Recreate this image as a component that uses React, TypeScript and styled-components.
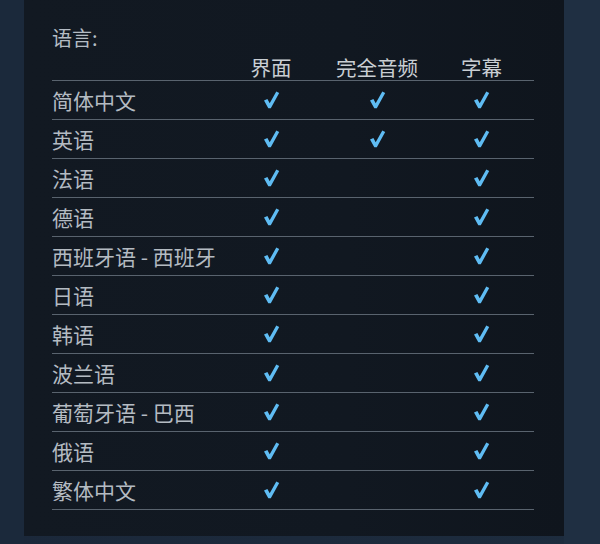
import React from "react";
import styled, { createGlobalStyle } from "styled-components";

const GlobalStyle = createGlobalStyle`
  html, body {
    margin: 0;
    padding: 0;
    background: #1c2a3b;
  }
  body {
    font-family: "Noto Sans CJK SC", "Noto Sans", sans-serif;
  }
`;

const Page = styled.div`
  width: 600px;
  height: 544px;
  display: flex;
  align-items: flex-start;
  background: linear-gradient(to right, #1b283a 0%, #1d2c3e 100%);
`;

const Gutter = styled.div<{ $width: number; $tone: string }>`
  width: ${(p) => p.$width}px;
  height: 100%;
  flex: none;
  background: ${(p) => p.$tone};
`;

const Panel = styled.div`
  width: 540px;
  height: 536px;
  box-sizing: border-box;
  padding: 26px 30px 0 28px;
  background: linear-gradient(to right, #121922 0%, #111821 60%, #0f151d 100%);
`;

const Title = styled.div`
  color: #b4bcc4;
  font-size: 20px;
  line-height: 24px;
`;

const Grid = styled.div`
  width: 482px;
  display: grid;
  grid-template-columns: 165px 108px 104px 105px;
`;

const HeadRow = styled.div`
  display: contents;
`;

const HeadCell = styled.div`
  height: 30px;
  display: flex;
  align-items: flex-end;
  justify-content: center;
  border-bottom: 1px solid #59636e;
  color: #c9ced3;
  font-size: 20.5px;
  line-height: 26px;
  white-space: nowrap;
`;

const Row = styled.div`
  display: contents;
`;

const Cell = styled.div<{ $name?: boolean }>`
  height: 38px;
  display: flex;
  align-items: center;
  justify-content: ${(p) => (p.$name ? "flex-start" : "center")};
  border-bottom: 1px solid #59636e;
  color: #b4bbc2;
  font-size: 21px;
  line-height: 24px;
  white-space: nowrap;
`;

const CheckIcon = styled.svg`
  width: 17px;
  height: 18px;
  display: block;
`;

type Lang = { name: string; ui: boolean; audio: boolean; subs: boolean };

const langs: Lang[] = [
  { name: "简体中文", ui: true, audio: true, subs: true },
  { name: "英语", ui: true, audio: true, subs: true },
  { name: "法语", ui: true, audio: false, subs: true },
  { name: "德语", ui: true, audio: false, subs: true },
  { name: "西班牙语 - 西班牙", ui: true, audio: false, subs: true },
  { name: "日语", ui: true, audio: false, subs: true },
  { name: "韩语", ui: true, audio: false, subs: true },
  { name: "波兰语", ui: true, audio: false, subs: true },
  { name: "葡萄牙语 - 巴西", ui: true, audio: false, subs: true },
  { name: "俄语", ui: true, audio: false, subs: true },
  { name: "繁体中文", ui: true, audio: false, subs: true },
];

const Mark = ({ on }: { on: boolean }) =>
  on ? (
    <CheckIcon viewBox="0 0 17 18">
      <path
        d="M1 9.6 L4.4 8 L6.7 12.2 L13.3 0.6 L16.2 1.9 L7.8 17.3 L5.3 17.3 Z"
        fill="#5fbcf3"
      />
    </CheckIcon>
  ) : null;

export default function App(): JSX.Element {
  return (
    <>
      <GlobalStyle />
      <Page>
        <Gutter $width={24} $tone="#1b293b" />
        <Panel>
          <Title>语言:</Title>
          <Grid>
            <HeadRow>
              <HeadCell />
              <HeadCell>界面</HeadCell>
              <HeadCell>完全音频</HeadCell>
              <HeadCell>字幕</HeadCell>
            </HeadRow>
            {langs.map((l) => (
              <Row key={l.name}>
                <Cell $name>{l.name}</Cell>
                <Cell>
                  <Mark on={l.ui} />
                </Cell>
                <Cell>
                  <Mark on={l.audio} />
                </Cell>
                <Cell>
                  <Mark on={l.subs} />
                </Cell>
              </Row>
            ))}
          </Grid>
        </Panel>
        <Gutter $width={36} $tone="#1f2f42" />
      </Page>
    </>
  );
}
